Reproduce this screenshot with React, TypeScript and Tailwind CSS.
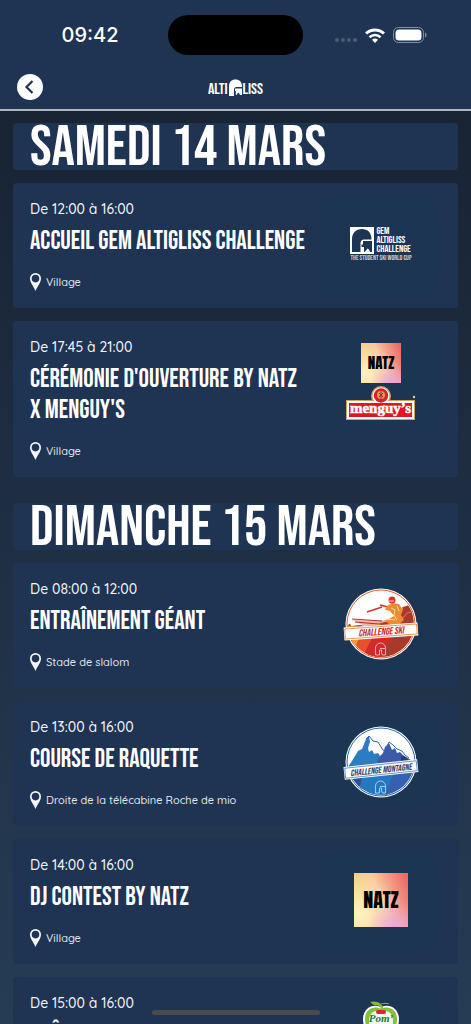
import type { ReactNode } from "react";

type ProgramEvent = {
  id: string;
  time: string;
  title: string;
  place: string;
  logo: ReactNode;
};

type ProgramDay = {
  id: string;
  label: string;
  events: ProgramEvent[];
};

function AltiglissLogo() {
  return (
    <div className="flex items-end text-base leading-3 text-white" aria-label="Altigliss">
      <span>ALTI</span>
      <svg viewBox="0 0 15 17" className="h-[17px] w-[15px]" fill="currentColor">
        <path d="M1 17V7.500C1 3 3.500.5 7.500.5S14 3 14 7.500V8H8.500C7 8 6 9 6 10.500V17z" />
        <path d="M7 9.500h7V16h-2l-.7-1.500-1-.8-.9.800L8.500 16H7.800v-4H7z" />
      </svg>
      <span>LISS</span>
    </div>
  );
}

function GemLogo() {
  return (
    <div className="text-white">
      <div className="flex gap-[2px]">
        <svg viewBox="0 0 24 27" className="h-[27px] w-6">
          <rect width="24" height="27" fill="#fff" />
          <g fill="#1c3553">
            <path d="M2 25V12C2 6 6 2 12 2s9.500 4 9.500 10v.5H14c-2 0-3.500 1.500-3.500 3.500v9z" />
            <path d="M13 14h9v11h-2l-1-2.500-1.500-1-1.500 2L14.500 25H14v-5h-2.500v-2.500H13z" />
          </g>
        </svg>
        <div className="text-[10px] leading-[9px]">
          <p>GEM</p>
          <p>ALTIGLISS</p>
          <p>CHALLENGE</p>
        </div>
      </div>
      <p className="text-center text-[7px] leading-2 whitespace-nowrap text-white/75">
        THE STUDENT SKI WORLD CUP
      </p>
    </div>
  );
}

function NatzLogo({ small = false }: { small?: boolean }) {
  return (
    <div
      className={`flex items-center justify-center bg-[radial-gradient(circle_at_75%_100%,#eda5d8_0%,transparent_40%),radial-gradient(circle_at_10%_75%,#fdf3c4_0%,transparent_65%),linear-gradient(70deg,#f8d078_10%,#f9c8a0_50%,#ec6a68_95%)] font-['Anton','Open_Sans_Condensed',sans-serif] text-black ${
        small ? "size-10 text-[15px]" : "size-[54px] text-xl"
      }`}
    >
      NATZ
    </div>
  );
}

function MenguysLogo() {
  return (
    <svg viewBox="0 0 72 36" className="h-9 w-[72px]">
      <circle cx="36" cy="11" r="10" fill="#c9a45c" />
      <rect x="1" y="15" width="69" height="20" fill="#c9a45c" />
      <circle cx="36" cy="11" r="8.500" fill="#fff" />
      <rect x="2" y="16" width="67" height="18" fill="#fff" />
      <circle cx="36" cy="10.500" r="7.200" fill="#d8202f" />
      <circle cx="36" cy="10" r="4" fill="#e29b5f" />
      <path d="M34 8l4 4M38 8l-4 4M36 6v8" stroke="#a8231f" strokeWidth="1" />
      <rect x="4" y="18" width="63" height="14" fill="#df1626" />
      <circle cx="69" cy="12" r="1.200" fill="#d8cfa8" />
      <text
        x="35.500"
        y="28"
        textAnchor="middle"
        fill="#fff"
        stroke="#fff"
        strokeWidth=".5"
        fontSize="15"
        fontWeight="700"
        fontFamily="'Liberation Serif', serif"
      >
        menguy’s
      </text>
    </svg>
  );
}

function BadgeArch() {
  return (
    <path
      d="M32.500 67v-7a5 5 0 0 1 10 0v7h-3l-1-2v-3h-2v5zM37 60.500h5"
      fill="none"
      stroke="#fff"
      strokeWidth=".8"
      opacity=".75"
    />
  );
}

function SkiLogo() {
  return (
    <svg viewBox="0 0 76 72" className="h-[72px] w-[76px]">
      <defs>
        <clipPath id="ski-disc">
          <circle cx="38" cy="36" r="33" />
        </clipPath>
      </defs>
      <circle cx="38" cy="36" r="35.500" fill="#fff" />
      <g clipPath="url(#ski-disc)">
        <path d="M0 40l8-5 14 3 14-4L60 19l16-5v60H0z" fill="#a93a2b" />
        <path d="M0 20h60L46 34 8 38z" fill="#fff" />
        <path d="M0 38l10 0 16 4-12 30H0z" fill="#f39a34" />
        <path d="M18 44h24L28 72H8z" fill="#e8502c" />
        <path d="M32 44h20L36 72H18z" fill="#d22a2b" />
        <path d="M52 31l5-3 3 2 4-5 4-1 5-5" fill="none" stroke="#d98b72" strokeWidth=".8" />
      </g>
      <circle cx="38" cy="36" r="34" fill="none" stroke="#e2632c" strokeWidth="1" />
      <path d="M9 32l28 1 14-3-15 7-14 1z" fill="#f3b1a0" />
      <path d="M9 31l30 2M12 34l24 2 16-4" stroke="#a53627" strokeWidth="1" fill="none" />
      <path d="M24 24l15-5M37 17l8 2 3 3" stroke="#c63a2b" strokeWidth="1.500" fill="none" />
      <path d="M44 18l5-3 7 1 4 6-2 5 3 5-6 5-9-1-4-3 4-2 5-3-4-5-5-1z" fill="#ee8b31" />
      <path d="M48 20l4 2-1 5 3 5M54 18l2 5M43 31l9 1" stroke="#fbd9a0" strokeWidth="1" fill="none" />
      <circle cx="49" cy="12" r="3.500" fill="#d8352a" />
      <path d="M46 13h5" stroke="#fbd9a0" strokeWidth="1" />
      <g transform="rotate(-4 38 44)">
        <rect x="1" y="37" width="74" height="13" fill="#fff" />
        <rect x="2" y="38.500" width="72" height="10" fill="#fff" stroke="#e98032" strokeWidth=".8" />
        <text x="38" y="47" textAnchor="middle" fill="#c3302b" fontSize="10" fontStyle="italic">
          CHALLENGE SKI
        </text>
      </g>
      <BadgeArch />
    </svg>
  );
}

function MountainLogo() {
  return (
    <svg viewBox="0 0 76 72" className="h-[72px] w-[76px]">
      <defs>
        <clipPath id="mountain-disc">
          <circle cx="38" cy="36" r="33" />
        </clipPath>
      </defs>
      <circle cx="38" cy="36" r="35.500" fill="#fff" />
      <circle cx="38" cy="36" r="34" fill="none" stroke="#2f66ad" strokeWidth="1" />
      <g clipPath="url(#mountain-disc)">
        <path
          d="M0 48L9 35l6-10 4-2 4-10 3-3 1 6-2 6 1 4 3-2 2 4 4-1 2 3 4-3 5 2v20H0z"
          fill="#2c7cc3"
        />
        <path d="M34 34l6-7 2-6 4-4 3 7 3-2 2 5 3-1 3 3 16 10-16 8-22 1z" fill="#3b5ba9" />
        <path d="M58 30l4 1 14 12-18 2z" fill="#263c74" />
        <path d="M0 46h22L18 72H0z" fill="#2d4f92" />
        <path d="M20 46h36L42 74H14z" fill="#2478c2" />
        <path d="M52 44h26v30H40z" fill="#3561b0" />
      </g>
      <path
        d="M23 13l3-3 4 5 5 1 5 8 2 1 4-9 4 3 4 4 5 2 3 4 4 3"
        fill="none"
        stroke="#2f66ad"
        strokeWidth="1"
      />
      <g transform="rotate(-6 38 44)">
        <rect x="1" y="37" width="74" height="13" fill="#fff" />
        <rect x="2" y="38.500" width="72" height="10" fill="#fff" stroke="#4a83c0" strokeWidth=".8" />
        <text x="38" y="47" textAnchor="middle" fill="#26406f" fontSize="9" fontStyle="italic">
          CHALLENGE MONTAGNE
        </text>
      </g>
      <BadgeArch />
    </svg>
  );
}

function PomPotesLogo() {
  return (
    <svg viewBox="0 0 40 76" className="h-[76px] w-10">
      <path d="M20 7C12 3 2 8 2 19s8 24 18 24 18-13 18-24S28 3 20 7z" fill="#fff" />
      <path d="M20 9C13 5 4 9 4 19s7 22 16 22 16-12 16-22S27 5 20 9z" fill="#86bf3c" />
      <path d="M20 12c-6-3-12 1-12 9s5 16 12 16 12-8 12-16-6-12-12-9z" fill="#f4f9e8" />
      <path d="M20 9c0-3-2-4-4-4-3 0-5-1-6-3 5 0 11 0 12 7zM20 4c3-1 5-1 8 0" fill="#86bf3c" stroke="#86bf3c" strokeWidth=".8" />
      <rect x="15" y="10" width="10" height="4" rx="2" fill="#dd2433" />
      <g
        fill="#187a45"
        fontFamily="'Liberation Serif', serif"
        fontWeight="700"
        fontStyle="italic"
        textAnchor="middle"
      >
        <text x="20" y="22" fontSize="11">
          Pom’
        </text>
        <text x="20" y="31" fontSize="11">
          Potes
        </text>
      </g>
    </svg>
  );
}

const days: ProgramDay[] = [
  {
    id: "samedi",
    label: "Samedi 14 mars",
    events: [
      {
        id: "accueil",
        time: "De 12:00 à 16:00",
        title: "Accueil GEM Altigliss Challenge",
        place: "Village",
        logo: <GemLogo />,
      },
      {
        id: "ceremonie",
        time: "De 17:45 à 21:00",
        title: "Cérémonie d'ouverture by NATZ x Menguy's",
        place: "Village",
        logo: (
          <div className="flex flex-col items-center gap-[2px]">
            <NatzLogo small />
            <MenguysLogo />
          </div>
        ),
      },
    ],
  },
  {
    id: "dimanche",
    label: "Dimanche 15 mars",
    events: [
      {
        id: "entrainement",
        time: "De 08:00 à 12:00",
        title: "Entraînement géant",
        place: "Stade de slalom",
        logo: <SkiLogo />,
      },
      {
        id: "raquette",
        time: "De 13:00 à 16:00",
        title: "Course de raquette",
        place: "Droite de la télécabine Roche de mio",
        logo: <MountainLogo />,
      },
      {
        id: "dj",
        time: "De 14:00 à 16:00",
        title: "DJ Contest by NATZ",
        place: "Village",
        logo: <NatzLogo />,
      },
      {
        id: "gouter",
        time: "De 15:00 à 16:00",
        title: "Goûter Pom'Potes",
        place: "Village",
        logo: <PomPotesLogo />,
      },
    ],
  },
];

function StatusBar() {
  return (
    <div className="grid h-[70px] grid-cols-[1fr_135px_1fr] items-center">
      <p className="pl-3 text-center font-['Inter',sans-serif] text-xl font-medium">
        09:42
      </p>
      <div className="h-10 rounded-full bg-black" />
      <div className="flex items-center justify-center gap-2 pr-3">
        <div className="flex gap-[2px] pt-[10px]">
          <span className="size-1 rounded-full bg-white/20" />
          <span className="size-1 rounded-full bg-white/20" />
          <span className="size-1 rounded-full bg-white/20" />
          <span className="size-1 rounded-full bg-white/20" />
        </div>
        <svg viewBox="0 0 20 15" className="h-[15px] w-5" fill="none" stroke="#fff" strokeWidth="3">
          <path d="M1 5.500a13 13 0 0 1 18 0" />
          <path d="M4.500 9.200a8 8 0 0 1 11 0" strokeWidth="2.600" />
          <path d="M10 15l-3-3.200a4.500 4.500 0 0 1 6 0z" fill="#fff" stroke="none" />
        </svg>
        <svg viewBox="0 0 34 16" className="h-4 w-[34px]">
          <rect x=".5" y=".5" width="30" height="15" rx="5" fill="none" stroke="#8391a5" />
          <rect x="2.500" y="2.500" width="26" height="11" rx="3.500" fill="#fff" />
          <path d="M32 5.500c2 .8 2 4.200 0 5z" fill="#8391a5" />
        </svg>
      </div>
    </div>
  );
}

function PlaceIcon() {
  return (
    <svg viewBox="0 0 11 18" className="h-[18px] w-[11px]" fill="#f4f5f7">
      <path
        fillRule="evenodd"
        d="M5.500 0A5.500 5.500 0 0 0 0 5.500C0 9.500 3.500 13 5.500 18 7.500 13 11 9.500 11 5.500A5.500 5.500 0 0 0 5.500 0zm0 1.800a3.800 3.800 0 1 1 0 7.600 3.800 3.800 0 0 1 0-7.600z"
      />
    </svg>
  );
}

function EventCard({ event }: { event: ProgramEvent }) {
  return (
    <article className="flex items-start rounded bg-[#1f3352] px-[17px]">
      <div className="min-w-0 flex-1 py-[17px]">
        <p className="text-sm leading-[18px] font-medium text-gray-100">{event.time}</p>
        <h3 className="mt-2 font-['Bebas_Neue',sans-serif] text-[26px] leading-[31px] text-white">
          {event.title}
        </h3>
        <p className="mt-4 flex items-center gap-[5px] text-[11px] leading-[18px] font-medium text-gray-200">
          <PlaceIcon />
          {event.place}
        </p>
      </div>
      <div className="mt-[15px] ml-4 flex h-[92px] w-[120px] shrink-0 items-center justify-center bg-[#1c3553] font-['Bebas_Neue',sans-serif]">
        {event.logo}
      </div>
    </article>
  );
}

export default function App() {
  return (
    <div className="relative flex h-screen flex-col overflow-hidden bg-linear-to-b from-[#172130] to-[#263c55] font-['Quicksand','Outfit','Inter',sans-serif] text-white">
      <header className="border-b-2 border-[#b1b6bf] bg-[#1f3352]">
        <StatusBar />
        <nav className="grid grid-cols-3 items-center px-[17px] pt-1 pb-[9px]">
          <button
            type="button"
            aria-label="Retour"
            className="flex size-[26px] items-center justify-center rounded-full bg-white"
          >
            <svg viewBox="0 0 26 26" className="size-[26px]" fill="none" stroke="#1f3352" strokeWidth="2.200">
              <path d="M15.500 7l-6 6 6 6" />
            </svg>
          </button>
          <div className="flex justify-center font-['Bebas_Neue',sans-serif]">
            <AltiglissLogo />
          </div>
        </nav>
      </header>

      <main className="min-h-0 flex-1 space-y-[26px] overflow-y-auto px-[13px] py-3 [scrollbar-width:none]">
        {days.map((day) => (
          <section key={day.id} className="space-y-[13px]">
            <h2 className="rounded bg-[#1f3352] px-[17px] pt-[2px] font-['Bebas_Neue',sans-serif] text-[58px] leading-[45px]">
              {day.label}
            </h2>
            {day.events.map((event) => (
              <EventCard key={event.id} event={event} />
            ))}
          </section>
        ))}
      </main>

      <div className="absolute bottom-[9px] left-1/2 h-[5px] w-[168px] -translate-x-1/2 rounded-full bg-[#4b4b4b]" />
    </div>
  );
}
